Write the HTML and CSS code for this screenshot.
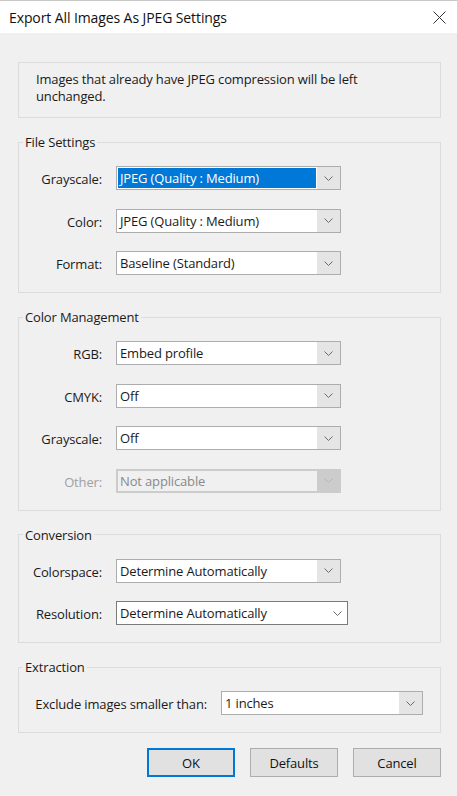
FILE: index.html
```html
<!DOCTYPE html>
<html lang="en">
<head>
<meta charset="utf-8">
<title>Export All Images As JPEG Settings</title>
<link rel="stylesheet" href="styles.css">
</head>
<body>
<div class="window">
  <header class="titlebar">
    <span class="title">Export All Images As JPEG Settings</span>
    <svg class="close" width="13" height="13" viewBox="0 0 13 13"><path d="M0.5 0.5 L12.5 12.5 M12.5 0.5 L0.5 12.5"/></svg>
  </header>
  <main class="content">
    <div class="note">Images that already have JPEG compression will be left unchanged.</div>

    <fieldset class="group">
      <legend>File Settings</legend>
      <div class="rows">
        <span class="lbl">Grayscale:</span>
        <div class="combo"><span class="field"><span class="sel">JPEG (Quality : Medium)</span></span><span class="arrow"><svg width="9" height="5" viewBox="0 0 9 5"><polyline points="0.5,0.5 4.5,4.5 8.5,0.5"/></svg></span></div>
        <span class="lbl">Color:</span>
        <div class="combo"><span class="field">JPEG (Quality : Medium)</span><span class="arrow"><svg width="9" height="5" viewBox="0 0 9 5"><polyline points="0.5,0.5 4.5,4.5 8.5,0.5"/></svg></span></div>
        <span class="lbl">Format:</span>
        <div class="combo"><span class="field">Baseline (Standard)</span><span class="arrow"><svg width="9" height="5" viewBox="0 0 9 5"><polyline points="0.5,0.5 4.5,4.5 8.5,0.5"/></svg></span></div>
      </div>
    </fieldset>

    <fieldset class="group">
      <legend>Color Management</legend>
      <div class="rows">
        <span class="lbl">RGB:</span>
        <div class="combo"><span class="field">Embed profile</span><span class="arrow"><svg width="9" height="5" viewBox="0 0 9 5"><polyline points="0.5,0.5 4.5,4.5 8.5,0.5"/></svg></span></div>
        <span class="lbl">CMYK:</span>
        <div class="combo"><span class="field">Off</span><span class="arrow"><svg width="9" height="5" viewBox="0 0 9 5"><polyline points="0.5,0.5 4.5,4.5 8.5,0.5"/></svg></span></div>
        <span class="lbl">Grayscale:</span>
        <div class="combo"><span class="field">Off</span><span class="arrow"><svg width="9" height="5" viewBox="0 0 9 5"><polyline points="0.5,0.5 4.5,4.5 8.5,0.5"/></svg></span></div>
        <span class="lbl disabled">Other:</span>
        <div class="combo is-disabled"><span class="field">Not applicable</span><span class="arrow"><svg width="9" height="5" viewBox="0 0 9 5"><polyline points="0.5,0.5 4.5,4.5 8.5,0.5"/></svg></span></div>
      </div>
    </fieldset>

    <fieldset class="group">
      <legend>Conversion</legend>
      <div class="rows">
        <span class="lbl">Colorspace:</span>
        <div class="combo"><span class="field">Determine Automatically</span><span class="arrow"><svg width="9" height="5" viewBox="0 0 9 5"><polyline points="0.5,0.5 4.5,4.5 8.5,0.5"/></svg></span></div>
        <span class="lbl">Resolution:</span>
        <div class="combo is-plain wide"><span class="field">Determine Automatically</span><span class="arrow"><svg width="9" height="5" viewBox="0 0 9 5"><polyline points="0.5,0.5 4.5,4.5 8.5,0.5"/></svg></span></div>
      </div>
    </fieldset>

    <fieldset class="group">
      <legend>Extraction</legend>
      <div class="rows extract">
        <span class="lbl">Exclude images smaller than:</span>
        <div class="combo"><span class="field">1 inches</span><span class="arrow"><svg width="9" height="5" viewBox="0 0 9 5"><polyline points="0.5,0.5 4.5,4.5 8.5,0.5"/></svg></span></div>
      </div>
    </fieldset>

    <div class="buttons">
      <button class="btn primary">OK</button>
      <button class="btn">Defaults</button>
      <button class="btn">Cancel</button>
    </div>
  </main>
</div>
</body>
</html>
```

FILE: styles.css
```css
* { box-sizing: border-box; }
html, body { margin: 0; padding: 0; }
body {
  width: 457px;
  height: 796px;
  background: #f0f0f0;
  font-family: "Open Sans", "Noto Sans", sans-serif;
  color: #1a1a1a;
  overflow: hidden;
  letter-spacing: -0.15px;
}
.window { display: flex; flex-direction: column; }

.titlebar {
  height: 33px;
  background: #fff;
  border-top: 1px solid #c9c9c9;
  display: flex;
  align-items: center;
  justify-content: space-between;
  padding: 0 11px 0 9px;
}
.title { font-size: 14px; color: #111; letter-spacing: -0.1px; }
.close { stroke: #333; stroke-width: 1; fill: none; }

.content {
  display: flex;
  flex-direction: column;
  padding: 29px 16px 0 18px;
}

.note {
  border: 1px solid #dcdcdc;
  height: 56px;
  padding: 8px 40px 0 17px;
  font-size: 13px;
  line-height: 17px;
}

.group {
  margin: 15px 0 0 0;
  padding: 15px 0 17px 0;
  border: 1px solid #dcdcdc;
  min-width: 0;
}
.group legend {
  margin-left: 4px;
  padding: 0 2px;
  font-size: 13px;
  line-height: 18px;
}

.rows {
  display: grid;
  grid-template-columns: 83px 225px;
  column-gap: 14px;
  row-gap: 18.5px;
  align-items: center;
}
.rows.extract { grid-template-columns: 188px 202px; }

.lbl {
  text-align: right;
  font-size: 13px;
  padding-top: 2px;
  white-space: nowrap;
}
.lbl.disabled { color: #a0a0a0; }

.combo {
  display: flex;
  height: 24px;
  border: 1px solid #adadad;
  background: #e5e5e5;
  font-size: 13px;
}
.combo.wide { width: 232px; }
.field {
  flex: 1;
  display: flex;
  align-items: center;
  background: #fff;
  padding-left: 3px;
  white-space: nowrap;
}
.field:has(.sel) { padding: 1px; }
.sel {
  flex: 1;
  align-self: stretch;
  display: flex;
  align-items: center;
  background: #0078d7;
  color: #fff;
  padding-left: 2px;
}
.arrow {
  width: 23px;
  display: flex;
  align-items: center;
  justify-content: center;
}
.arrow svg { fill: none; stroke: #6a6a6a; stroke-width: 1; }

.combo.is-disabled { background: #cccccc; border-color: #cccccc; }
.combo.is-disabled .field { background: #f0f0f0; margin: 1px 0 1px 1px; padding-left: 2px; color: #8a8a8a; }
.combo.is-disabled .arrow svg { stroke: #b4b4b4; }

.combo.is-plain { background: #fff; border-color: #7a7a7a; }
.combo.is-plain .arrow { width: 20px; }

.buttons {
  display: flex;
  justify-content: flex-end;
  gap: 15px;
  margin-top: 15px;
}
.btn {
  width: 88px;
  height: 29px;
  border: 1px solid #adadad;
  background: #e1e1e1;
  font-family: inherit;
  font-size: 13px;
  letter-spacing: inherit;
  color: #111;
  padding: 0;
}
.btn.primary { border-color: #0078d7; box-shadow: inset 0 0 0 1px #0078d7; }
```
